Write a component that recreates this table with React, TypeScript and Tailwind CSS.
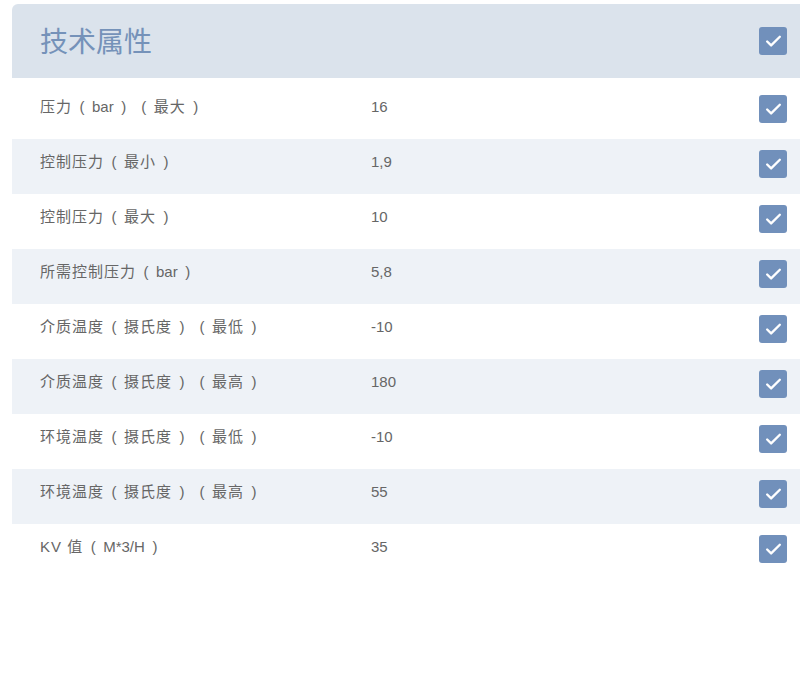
import { Check } from "lucide-react";

const rows = [
  { label: "压力（bar）（最大）", value: "16" },
  { label: "控制压力（最小）", value: "1,9" },
  { label: "控制压力（最大）", value: "10" },
  { label: "所需控制压力（bar）", value: "5,8" },
  { label: "介质温度（摄氏度）（最低）", value: "-10" },
  { label: "介质温度（摄氏度）（最高）", value: "180" },
  { label: "环境温度（摄氏度）（最低）", value: "-10" },
  { label: "环境温度（摄氏度）（最高）", value: "55" },
  { label: "KV 值（M*3/H）", value: "35" },
];

function CheckBox() {
  return (
    <div className="w-[28px] h-[28px] rounded-[3px] bg-[#7190bb] flex items-center justify-center shrink-0">
      <Check className="w-[19px] h-[19px] text-white" strokeWidth={3} />
    </div>
  );
}

// full-width brackets are drawn centred in a wide cell, like the source font does
function Label({ text }: { text: string }) {
  const parts = text.split(/([（）])/).filter(Boolean);
  return (
    <>
      {parts.map((p, i) =>
        p === "（" || p === "）" ? (
          <span key={i} className="inline-block w-[20px] text-center">
            {p === "（" ? "(" : ")"}
          </span>
        ) : /[\u4e00-\u9fff]/.test(p) ? (
          <span key={i} className="tracking-[1px]">{p}</span>
        ) : (
          <span key={i}>{p}</span>
        )
      )}
    </>
  );
}

export default function App() {
  return (
    <div
      className="min-h-[674px] bg-white pt-[4px] pl-[12px]"
      style={{ fontFamily: '"Liberation Sans", "Noto Sans CJK SC", sans-serif' }}
    >
      <div className="w-[788px]">
        <div className="h-[74px] bg-[#dbe3ec] rounded-tl-[6px] flex items-center justify-between pl-[28px] pr-[13px]">
          <h2 className="text-[28px] text-[#7592b9] leading-none mt-[4px]">技术属性</h2>
          <CheckBox />
        </div>
        <div className="mt-[6px]">
          {rows.map((row, i) => (
            <div
              key={row.label + i}
              className={`h-[55px] flex items-start pt-[11px] pl-[28px] pr-[13px] ${i % 2 === 1 ? "bg-[#eef2f7]" : "bg-white"}`}
            >
              <div className="w-[331px] text-[15px] leading-[20px] text-[#666] mt-[2px] whitespace-nowrap">
                <Label text={row.label} />
              </div>
              <div className="flex-1 text-[15px] leading-[20px] text-[#666] mt-[2px]">{row.value}</div>
              <CheckBox />
            </div>
          ))}
        </div>
      </div>
    </div>
  );
}
